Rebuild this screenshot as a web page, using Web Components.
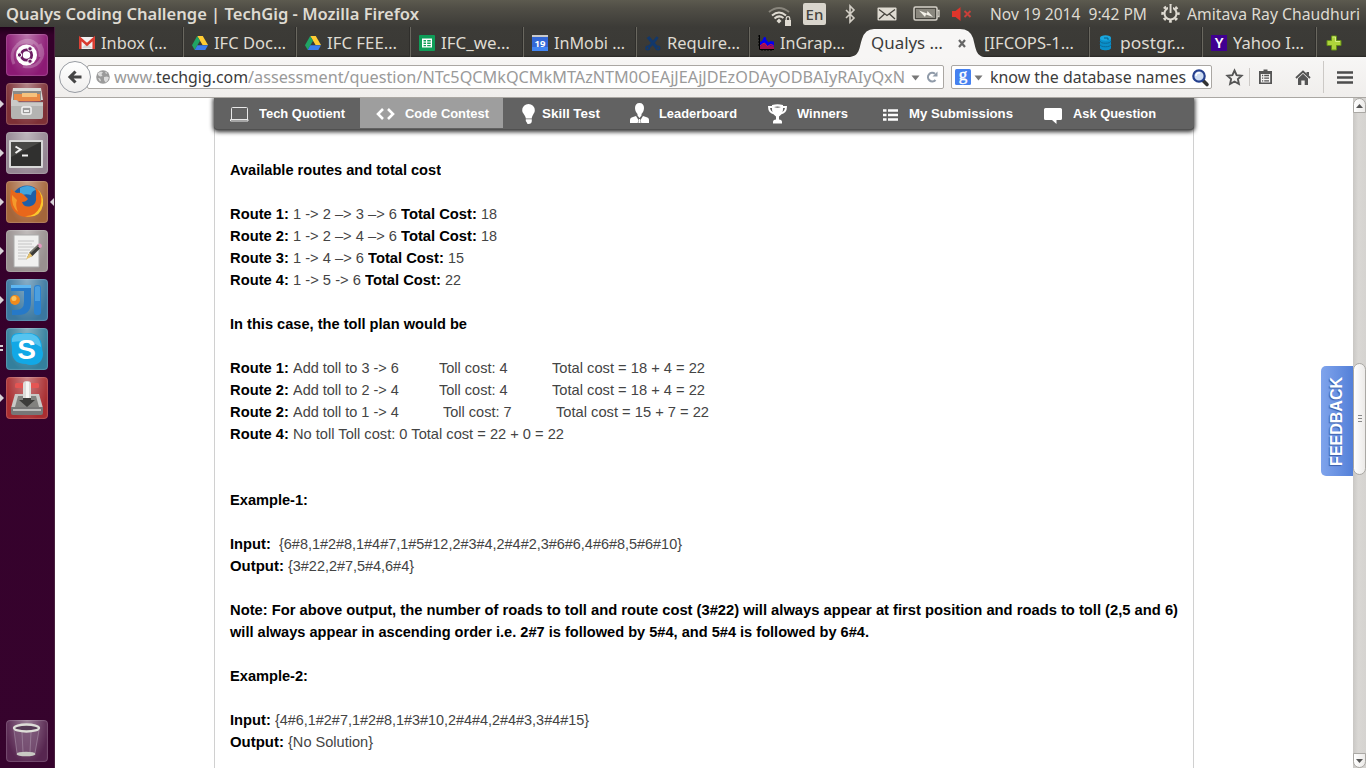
<!DOCTYPE html>
<html lang="en">
<head>
<meta charset="utf-8">
<title>Qualys Coding Challenge | TechGig</title>
<style>
html,body{margin:0;height:100%;overflow:hidden;background:#fff}
body{font-family:"Liberation Sans",Arial,sans-serif}
</style>
</head>
<body>
<desktop-shell></desktop-shell>
<script>
function define(name, render) {
  customElements.define(name, class extends HTMLElement {
    constructor() { super(); this.attachShadow({mode: 'open'}); }
    connectedCallback() { if (!this.shadowRoot.firstChild) this.shadowRoot.innerHTML = render(this); }
  });
}
const UI = `"Noto Sans","Open Sans",sans-serif`;

/* Icon artwork, keyed by name: [width, height, markup] */
const icons = {
  wifi: [24,20,`<g fill="none" stroke-width="2"><path d="M1 6Q11-2 21 6" stroke="#88857c"/><path d="M4 9.500Q11 3.500 18 9.500M6.500 12.500Q11 8.500 15.500 12" stroke="#dfdbd2"/></g><path d="M8.500 15l2.500-2.500 2.500 2.500-2.500 2.500z" fill="#dfdbd2"/><path d="M17 14h6v6h-6z" fill="#dfdbd2"/><path d="M18.200 14v-1.500a1.800 1.800 0 0 1 3.600 0V14" fill="none" stroke="#dfdbd2" stroke-width="1.200"/>`],
  bt: [10,18,`<path d="M1 5l8 8-4 4V1l4 4-8 8" fill="none" stroke="#d3cfc6" stroke-width="1.600"/>`],
  mail: [20,14,`<rect x=".5" y=".5" width="19" height="13" rx="1" fill="#dfdbd2"/><path d="M2 2.500l8 6 8-6M2 12l5.500-5M18 12l-5.500-5" fill="none" stroke="#45433d" stroke-width="1.300"/>`],
  battery: [27,15,`<rect x="1" y="1" width="23" height="13" rx="1.500" fill="none" stroke="#d5d1c8" stroke-width="1.500"/><rect x="3" y="3" width="19" height="9" fill="#8a877e"/><path d="M24.500 4.500H26v6h-1.500" fill="none" stroke="#d5d1c8" stroke-width="1.300"/><path d="M6 4.500l8 3 .5-2.500 5.500 6-7-2.500-1 2.500z" fill="#f4f1e9"/>`],
  volume: [20,14,`<path d="M0 4h3.500L8.500 0v14L3.500 10H0z" fill="#e0352b"/><path d="M12.500 4l6 6m0-6l-6 6" stroke="#c9403a" stroke-width="1.900"/>`],
  gear: [19,19,`<g stroke="#dfdbd2" fill="none"><circle cx="9.500" cy="9.500" r="6" stroke-width="2"/><circle cx="9.500" cy="9.500" r="7.900" stroke-width="2.600" stroke-dasharray="2.800 3.404" stroke-dashoffset="1.400"/></g><path d="M7 .5h5V8H7z" fill="#4f4d46"/><path d="M8.600 0h1.900v9H8.600z" fill="#dfdbd2"/>`],
  gmail: [16,12,`<rect width="16" height="12" rx="1" fill="#f1f1f1"/><path d="M3 11l5-5 5 5z" fill="#d4d4d4"/><path d="M1.300 12V1.500L8 7.500l6.700-6V12" fill="none" stroke="#d93a2e" stroke-width="2.500"/>`],
  drive: [16,14,`<path d="M5.200 0h5.600L16 9h-5.400z" fill="#fc3"/><path d="M5.200 0L0 9.200 2.700 14 8 4.800z" fill="#20a464"/><path d="M5.400 9.200H16L13.300 14H2.700z" fill="#3b7ded"/>`],
  sheet: [16,16,`<rect width="16" height="16" rx="1" fill="#0f9d58"/><path d="M3 3.500h10v9H3z" fill="#fff"/><path d="M4.500 5H7v1.500H4.500zM8.200 5h3.500v1.500H8.200zM4.500 7.500H7V9H4.500zM8.200 7.500h3.500V9H8.200zM4.500 10H7v1.300H4.500zM8.200 10h3.500v1.300H8.200z" fill="#0f9d58"/>`],
  cal: [16,16,`<rect width="16" height="16" rx="1" fill="#3367d6"/><path d="M0 0h16v2H0z" fill="#c9c9c9"/><path d="M0 12h16v4H0z" fill="#4285f4"/><text x="8" y="12.400" text-anchor="middle" font-family="Noto Sans" font-weight="bold" font-size="9.500" fill="#fff">19</text>`],
  jira: [16,15,`<g fill="none" stroke="#12386b"><path d="M3 1l9 11" stroke-width="3.200"/><path d="M12.500 1Q8 8 3 11.500" stroke-width="2.600"/><circle cx="2.700" cy="12" r="1.700" stroke-width="1.600"/><circle cx="13" cy="12" r="1.700" stroke-width="1.600"/></g>`],
  graph: [16,16,`<path d="M1.500 14V7L4 6l2-4h1.500l1 3 2 2.500 2-1.500 2.500.5H16V14z" fill="#00e"/><path d="M1.500 15v-3l2-2 3-2 3 3.500 3-1 3.500 1V15z" fill="#a0124f"/><path d="M1.500 11.500l2-2 3-1.500 3 3.500 3-2 3 1" fill="none" stroke="#e3123a"/><path d="M1.500 0v14.500H16M0 1h1.500M0 4h1.500M0 7h1.500M0 10h1.500M4 14v2M7 14v2M10 14v2M13 14v2" stroke="#000" fill="none"/>`],
  db: [14,16,`<path d="M1 3v10c0 3 11 3 11 0V3z" fill="#0a8fc9"/><ellipse cx="6.500" cy="3" rx="5.500" ry="2.700" fill="#19a7df"/><path d="M1 6c0 3 11 3 11 0M1 9.500c0 3 11 3 11 0" fill="none" stroke="#0b6c9b" stroke-width="1"/><path d="M5 3h4v2" stroke="#0b5d87" fill="none"/>`],
  yahoo: [16,16,`<rect width="16" height="16" fill="#400090"/><text x="8" y="13" text-anchor="middle" font-family="Noto Sans" font-weight="600" font-size="14.500" fill="#fff" style="line-height:1">Y</text>`],
  plus: [16,16,`<path d="M5.500 1h5v4.500H15v5h-4.500V15h-5v-4.500H1v-5h4.500z" fill="#aed43b" stroke="#648f17" stroke-width="1"/><path d="M6.500 2h3v4.500H14" stroke="#d6ee86" fill="none"/>`],
  close: [8,9,`<path d="M1 1l6 7M7 1L1 8" stroke="#666" stroke-width="2.200"/>`],
  back: [14,14,`<path d="M13.500 7H3M7.500 1.500L2 7l5.500 5.500" fill="none" stroke="#454545" stroke-width="3.100"/>`],
  globe: [14,14,`<circle cx="7" cy="7" r="6.800" fill="#9b9b9b"/><path d="M2 3l3-1.500 2 1L5.500 4l1 2-2.500.500L2 5zM8 7l3-.500 2 1-1.500 3.500-2 1.500L8 10zM9 1.500l2.500 1.500L10 4zM2 8l2 .5 1 2-1 1z" fill="#dcdcdc"/>`],
  tri: [9,6,`<path d="M.5.500h8L4.500 5.500z" fill="#777"/>`],
  reload: [12,12,`<path d="M9 2.800A4.300 4.300 0 1 0 9.500 9" fill="none" stroke="#909ba9" stroke-width="2.100"/><path d="M6.500 5.500h5V.5z" fill="#909ba9"/>`],
  google: [16,16,`<rect width="16" height="16" rx="1.500" fill="#4581f0"/><text x="8" y="11.300" text-anchor="middle" font-family="Liberation Serif" font-size="17" fill="#fff" stroke="#fff" stroke-width=".4">g</text>`],
  search: [17,17,`<path d="M10.500 11l4.500 4.500" stroke="#333" stroke-width="3.600" stroke-linecap="round"/><circle cx="7" cy="7" r="5.700" fill="#cddcf3" stroke="#25408e" stroke-width="2.200"/><path d="M4 7a3 3 0 0 1 4-3" stroke="#fff" fill="none" stroke-width="1.500"/>`],
  star: [17,16,`<path d="M8.500 1.500l2.100 4.600 5 .6-3.700 3.400 1 4.900-4.400-2.500L4.100 15l1-4.900L1.400 6.700l5-.6z" fill="none" stroke="#555" stroke-width="1.900"/>`],
  clip: [15,16,`<path d="M5.500.5h4V2H14v13H1V2h4.500z" fill="#555"/><path d="M2.800 5h9.400v8.500H2.800z" fill="#f4f3f2"/><path d="M4 6.500h1.200M6.200 6.500H11M4 9.200h1.200M6.200 9.200H11M4 11.800h1.200M6.200 11.800H11" stroke="#555" stroke-width="1.300"/>`],
  home: [16,15,`<path d="M1 8L8 1.500 15 8" fill="none" stroke="#555" stroke-width="1.900"/><path d="M3 8.500l5-4.700 5 4.700V15H9.700v-4.500H6.300V15H3z" fill="#555"/><path d="M11.500 2H14v4l-2.500-2z" fill="#555"/>`],
  menu: [16,13,`<path d="M0 1.500h16M0 6.500h16M0 11.500h16" stroke="#4c4c4c" stroke-width="2.600"/>`],
  laptop: [19,15,`<path d="M1.500 12V1.500q0-1 1-1h14q1 0 1 1V12M.5 12.500h17.500v1.500H.5z" fill="none" stroke="#e8e8e8" stroke-width="1"/>`],
  code: [19,12,`<path d="M7 1L2 6l5 5M12 1l5 5-5 5" fill="none" stroke="#fff" stroke-width="2.600"/>`],
  bulb: [13,20,`<path d="M6.500 0A6.300 6.300 0 0 1 12.800 6.300C12.800 9.500 10 11 9.800 14.500H3.800C3.500 11 .2 9.500.2 6.300A6.300 6.300 0 0 1 6.500 0zM3.800 15.300h6V17q0 3-3.500 3Q5 20 4.800 18.500L3.800 17z" fill="#fff"/>`],
  person: [19,20,`<path d="M9.500 0c3 0 4.500 2 4.500 5s-1.500 5-2.500 6v1.500L9.500 15l-2-2.500V11C6.500 10 5 8 5 5s1.500-5 4.500-5z" fill="#fff"/><path d="M6 13l2.500 4-.8 3H0v-3q0-2.500 3-3zM13 13l-2.500 4 .8 3H19v-3q0-2.500-3-3zM9 16h1l.7 4H8.300z" fill="#fff"/>`],
  cup: [19,20,`<path d="M4 1q5.500-1.500 11 0v4q0 5-4 7.500v3q3 .3 3 2.500v1.500H5V18q0-2.200 3-2.500v-3Q4 10 4 5z" fill="#fff"/><path d="M4.500 3H1q0 5.500 5.500 6.500M14.500 3H18q0 5.500-5.500 6.500" fill="none" stroke="#fff" stroke-width="1.900"/><path d="M6 3q3.500-1 7 0-3.500 1.500-7 0z" fill="#626262"/>`],
  list: [15,12,`<path d="M0 1.500h3.500M5 1.500h10M0 6h3.500M5 6h10M0 10.500h3.500M5 10.500h10" stroke="#fff" stroke-width="2.700"/>`],
  bubble: [18,16,`<path d="M1.500 0h15Q18 0 18 1.500v9q0 1.500-1.500 1.500H12.500v4L8 12H1.500Q0 12 0 10.500v-9Q0 0 1.500 0z" fill="#fff"/>`],

  ubuntu: [42,42,`<g fill="none" stroke="#fff" stroke-opacity=".22" stroke-width="3"><path d="M8 30C1 15 15 4 27 10M34 10c8 14-4 26-17 22M11 11c10-10 25-3 23 12"/></g><circle cx="20.500" cy="21" r="10.500" fill="#fff"/><circle cx="20.500" cy="21" r="5.200" fill="none" stroke="#6c1c62" stroke-width="2.800"/><g fill="#6c1c62" stroke="#fff"><circle cx="13.500" cy="21" r="2.200"/><circle cx="24" cy="14.800" r="2.200"/><circle cx="24" cy="27.200" r="2.200"/></g>`],
  files: [42,42,`<path d="M7 5h28l2 12H5z" fill="#d8d8d6"/><path d="M7 8h28v10H7z" fill="#8b8b89"/><path d="M8 11h26v7H8z" fill="#e98945"/><path d="M16 10h15v4H16z" fill="#f6c27d"/><path d="M5 17h6l2 2h24v14q0 3-2 3H7q-2 0-2-3z" fill="#b4b4b2"/><path d="M5 17h5l3 3h24v3H5z" fill="#cacac8"/><rect x="16" y="24" width="9" height="7" rx="1" fill="#999" stroke="#f6f6f6" stroke-width="1.500"/><path d="M18 27h5v2h-5z" fill="#eee"/>`],
  term: [42,42,`<rect x="3" y="8" width="34" height="28" rx="1" fill="#d8d8d8"/><rect x="5" y="10" width="30" height="24" fill="#30302f"/><path d="M5 10h30L5 25z" fill="#484846"/><path d="M9.500 14.500l5 3-5 3.500M16 23.500h6" stroke="#f2f2f2" fill="none" stroke-width="2"/>`],
  firefox: [42,42,`<circle cx="21" cy="20" r="15.500" fill="#1f5fa8"/><path d="M14 7q9-5 17 2-5 0-6 5-6-2-11 1z" fill="#42a5de"/><path d="M5 8q3 3 6 4 4-1 7 2l4 4q-2 3-6 3 2 6 9 4 6-2 5-10 1-6-2-9 7 4 9 12 1 12-9 17-12 4-20-5C3 24 4 15 5 8z" fill="#e8671b"/><path d="M31 8q7 7 3 18-5 10-15 9 15 3 18-11Q38 13 31 8z" fill="#fbc82e"/><path d="M6 14q-1 11 6 17-3-7-1-12z" fill="#f59a2b"/>`],
  edit: [42,42,`<path d="M8 5h25v32H8z" fill="#f0f0ef" stroke="#aaa"/><path d="M12 11h16M12 14h14M12 17h16M12 20h12M12 23h10M12 26h8M12 29h9" stroke="#c4c4c4"/><path d="M21 28l2.500-5.500L32 14.500l3 3-8.500 8.500z" fill="#3b3b38"/><path d="M20 29.500l3.500-7 3 3.500z" fill="#e6c26c"/><path d="M31 15l2-1.500q3.500 0 2.700 3.500L34 18.500z" fill="#e59ac0"/><path d="M24 22l8-7.500 1 1-8 7.500z" fill="#7b7b72"/>`],
  idea: [42,42,`<path d="M5 6h20v17q0 13-13 13H6v-5h4q8 0 8-8V12H5z" fill="#2679c8"/><path d="M5 6h20v3H5z" fill="#5fb7f1"/><rect x="28" y="6" width="7" height="30" rx="3" fill="#2b83d2"/><path d="M29 8q3-2 5 0v14h-5z" fill="#4b9fe0"/><circle cx="9" cy="21" r="5" fill="#f18a1c"/><circle cx="8" cy="19.500" r="2.500" fill="#fcc45c"/>`],
  skype: [42,42,`<path d="M5 14Q4 4 15 5q3 1 5 0 15-1 16 14 0 3 1 6 0 12-12 12-3 0-5-1Q5 36 6 21q0-3-1-7z" fill="#12a8e6"/><path d="M6 14Q5 5 15 6q19-3 20 13-12-8-29-5z" fill="#55c4f0"/><text x="20.500" y="30.500" text-anchor="middle" font-family="Liberation Sans" font-weight="bold" font-size="28" fill="#fff">S</text>`],
  down: [42,42,`<rect x="9" y="6" width="24" height="5" rx="1.500" fill="#e45553"/><path d="M9 17h24l4 14H5z" fill="#c8c8c6"/><path d="M12 19h18l3 11H9z" fill="#82827f"/><path d="M5 30h32v6q0 2-2 2H7q-2 0-2-2z" fill="#777" /><path d="M7 32h28v2H7z" fill="#bdbdbb"/><path d="M17 20h8v3l4 0-8 7-8-7h4z" fill="#3c3c3a"/><path d="M17 7q0-3 4-3t4 3v14h-8z" fill="#ddddda"/><path d="M20 5h3v16h-3z" fill="#f6f6f4"/>`],
  trash: [42,42,`<path d="M8 8l3 25q9 4 18 0l4-25z" fill="#7a5577" fill-opacity=".65"/><path d="M8 10l3 23M33 10l-4 23M16 12l1 20M25 12l-1 20" stroke="#a991a8" stroke-opacity=".6"/><ellipse cx="20.500" cy="8" rx="12.500" ry="3.500" fill="#563a55" stroke="#deded8" stroke-width="2.300"/><ellipse cx="20" cy="34" rx="9.500" ry="2.300" fill="#c9c9c4"/>`]
};
define('ui-icon', el => {
  const [w, h, art] = icons[el.getAttribute('name')];
  return `<style>:host{display:block;flex:none;width:${w}px;height:${h}px}svg{display:block;overflow:visible}</style>
    <svg width="${w}" height="${h}" viewBox="0 0 ${w} ${h}">${art}</svg>`;
});

/* Top panel */
define('top-panel', () => `<style>
  :host{display:flex;align-items:center;height:27px;box-sizing:border-box;padding:0 6px;
    background:linear-gradient(#5c5a4f,#504e46 30%,#3c3b37);color:#dfdbd2;font:16.5px/27px ${UI}}
  b{font-weight:600}
  .sp{flex:1}
  .en{width:23px;height:22px;border-radius:2px;background:#d9d5cc;color:#45433d;font:500 15px/22px ${UI};text-align:center;margin:0 19px 0 11px}
  </style>
  <fit-text w="413"><b>Qualys Coding Challenge | TechGig - Mozilla Firefox</b></fit-text><span class="sp"></span>
  <ui-icon name="wifi" style="margin-top:4px"></ui-icon><div class="en">En</div>
  <ui-icon name="bt"></ui-icon><ui-icon name="mail" style="margin-left:22px"></ui-icon>
  <ui-icon name="battery" style="margin-left:16px"></ui-icon><ui-icon name="volume" style="margin-left:12px"></ui-icon>
  <fit-text w="157" style="margin-left:18px">Nov 19 2014  9:42 PM</fit-text>
  <ui-icon name="gear" style="margin-left:14px"></ui-icon>
  <fit-text w="173" style="margin-left:7px">Amitava Ray Chaudhuri</fit-text>`);

/* Launcher */
define('launch-tile', el => `<style>
  :host{display:flex;align-items:center;width:54px;height:42px;box-sizing:border-box;position:relative}
  .t{width:42px;height:42px;margin-left:6px;border-radius:4px;background:radial-gradient(ellipse at 50% 0,rgba(255,255,255,.4),rgba(255,255,255,0) 75%),${el.getAttribute('color')};box-shadow:inset 0 0 1px 1px rgba(255,255,255,.18)}
  .l,.r{position:absolute;top:17px;width:0;height:0;border:4px solid transparent}
  .l{left:0;border-left-color:#d8d2d7;border-right:0}
  .r{right:0;border-right-color:#d8d2d7;border-left:0}
  .d{position:absolute;left:0;top:17px;width:3px;height:2px;border:solid #d8d2d7;border-width:2px 0}
  </style>${({run:'<i class="l"></i>', focus:'<i class="l"></i><i class="r"></i>', two:'<i class="d"></i>'})[el.getAttribute('state')] || ''}
  <div class="t"><ui-icon name="${el.getAttribute('icon')}"></ui-icon></div>`);
define('side-launcher', () => `<style>
  :host{display:flex;flex-direction:column;gap:7px;width:55px;box-sizing:border-box;padding:7px 0 6px;border-right:1px solid #49213f;
   background:linear-gradient(#1e0018,#35002b 8px,#36032d);flex:none}
  launch-tile:last-child{margin-top:auto}</style>
  <launch-tile icon="ubuntu" color="#8c1a74"></launch-tile>
  <launch-tile icon="files" color="#7d3036" state="run"></launch-tile>
  <launch-tile icon="term" color="#948692" state="run"></launch-tile>
  <launch-tile icon="firefox" color="#a4653a" state="focus"></launch-tile>
  <launch-tile icon="edit" color="#98908f" state="run"></launch-tile>
  <launch-tile icon="idea" color="#3a779f" state="run"></launch-tile>
  <launch-tile icon="skype" color="#337f9c" state="two"></launch-tile>
  <launch-tile icon="down" color="#a92d30" state="run"></launch-tile>
  <launch-tile icon="trash" color="#572650"></launch-tile>`);

/* Tabs */
define('browser-tab', el => {
  const icon = el.getAttribute('icon');
  return `<style>
  :host{display:flex;align-items:center;flex:none;width:113.200px;height:30px;box-sizing:border-box;padding:2px 0 0 8px;border-right:1px solid #69675f;box-shadow:inset -1px 0 #2f2e2b;color:#dfdbd2}
  :host([plain]){border-color:transparent;box-shadow:none}
  .i{width:16px;display:flex;justify-content:center;margin-right:6px}
  </style>${icon ? `<div class="i"><ui-icon name="${icon}"></ui-icon></div>` : ''}<fit-text w="${el.getAttribute('w')}"><slot></slot></fit-text>`;
});
define('active-tab', () => `<style>
  :host{display:grid;flex:none;width:140px;height:30px;margin:0 -13px 0 -14px;color:#3c3c3c;z-index:1}
  svg,.c{grid-area:1/1}
  .c{display:flex;align-items:center;padding:2px 0 0 34px;line-height:28px}
  ui-icon{margin-left:15px}</style>
  <svg width="150" height="30"><path d="M11 30C23 30 22 21 25 12Q28 2 37 2H123Q133 2 136 11C139 22 139 30 149 30z" fill="#f7f6f5"/></svg>
  <div class="c"><fit-text w="72"><slot></slot></fit-text><ui-icon name="close"></ui-icon></div>`);
define('tab-strip', () => `<style>
  :host{display:flex;height:30px;padding-left:16px;background:linear-gradient(#3c3b37,#3a3935 28px,#282724);font:16.500px/28px ${UI}}
  ui-icon{margin:8px 0 0 9px}</style>
  <browser-tab icon="gmail" w="66">Inbox (…</browser-tab>
  <browser-tab icon="drive" w="72">IFC Doc…</browser-tab>
  <browser-tab icon="drive" w="70">IFC FEE…</browser-tab>
  <browser-tab icon="sheet" w="69">IFC_we…</browser-tab>
  <browser-tab icon="cal" w="71">InMobi …</browser-tab>
  <browser-tab icon="jira" w="73">Require…</browser-tab>
  <browser-tab icon="graph" w="65" plain style="width:101px">InGrap…</browser-tab>
  <active-tab>Qualys …</active-tab>
  <browser-tab w="90" style="width:126px;padding-left:20px">[IFCOPS-1…</browser-tab>
  <browser-tab icon="db" w="65">postgr…</browser-tab>
  <browser-tab icon="yahoo" w="71">Yahoo I…</browser-tab>
  <ui-icon name="plus"></ui-icon>`);

/* Navigation toolbar */
define('nav-toolbar', () => `<style>
  :host{display:flex;align-items:center;height:41px;box-sizing:border-box;border-bottom:1px solid #aaa7a3;background:linear-gradient(#f7f6f5,#f0eeec);font:16.500px/22px ${UI};color:#3c3c3c;padding-left:4px}
  .back{width:32px;height:32px;box-sizing:border-box;border:1px solid #989ca3;border-radius:50%;background:linear-gradient(#fff,#efeeed);display:grid;place-items:center;z-index:1;flex:none}
  .box{display:flex;align-items:center;height:24px;box-sizing:border-box;border:1px solid #aaa7a3;border-radius:2px;background:#fff;flex:none}
  .url{width:857px;margin-left:-4px;padding-left:8px;color:#9a9a9a}
  .url b{font-weight:400;color:#3a3a3a}
  .s{width:261px;margin-left:7px;padding-left:3px}
  .v{width:1px;background:#ccc9c6;height:18px}
  </style>
  <div class="back"><ui-icon name="back"></ui-icon></div>
  <div class="box url"><ui-icon name="globe"></ui-icon><fit-text w="42" style="margin-left:4px">www.</fit-text><fit-text w="92"><b>techgig.com</b></fit-text><fit-text w="657">/assessment/question/NTc5QCMkQCMkMTAzNTM0OEAjJEAjJDEzODAyODBAIyRAIyQxN</fit-text><ui-icon name="tri" style="margin:1px 0 0 6px"></ui-icon><ui-icon name="reload" style="margin-left:6px"></ui-icon></div>
  <div class="box s"><ui-icon name="google"></ui-icon><ui-icon name="tri" style="margin:1px 0 0 3px"></ui-icon><fit-text w="196" style="margin-left:7px">know the database names</fit-text><ui-icon name="search" style="margin-left:6px"></ui-icon></div>
  <ui-icon name="star" style="margin-left:14px"></ui-icon><div class="v" style="margin:0 8px 0 6px"></div><ui-icon name="clip"></ui-icon>
  <ui-icon name="home" style="margin-left:22px"></ui-icon><div class="v" style="height:32px;margin:0 13px 0 12px"></div><ui-icon name="menu"></ui-icon>`);

/* Site menu */
define('menu-item', el => `<style>
  :host{display:flex;align-items:center;height:30px;box-sizing:border-box;flex:none}
  ui-icon{margin-right:var(--gap,10px);position:relative;top:var(--dy,0px)}
  fit-text{padding-top:2px}
  :host([on]){background:#9e9e9e}
  </style><ui-icon name="${el.getAttribute('icon')}"></ui-icon><fit-text w="${el.getAttribute('w')}"><slot></slot></fit-text>`);
define('site-menu', () => `<style>
  :host{display:flex;height:32px;background:#626262;border-radius:0 0 4px 4px;box-shadow:0 1px 4px 1px #333,inset 0 -1px #505050;color:#fff;font:bold 13px/28px "Liberation Sans",sans-serif;margin:0 -1px}
  </style>
  <menu-item icon="laptop" w="86" style="width:146px;padding-left:16px;--dy:1px">Tech Quotient</menu-item>
  <menu-item icon="code" w="84" on style="width:143px;padding-left:16px;--dy:1px">Code Contest</menu-item>
  <menu-item icon="bulb" w="58" style="width:107px;padding-left:19px;--gap:7px;--dy:1px">Skill Test</menu-item>
  <menu-item icon="person" w="78" style="width:138px;padding-left:20px">Leaderboard</menu-item>
  <menu-item icon="cup" w="51" style="width:112px;padding-left:20px;--dy:1px">Winners</menu-item>
  <menu-item icon="list" w="104" style="width:164px;padding-left:23px;--gap:11px;--dy:2px">My Submissions</menu-item>
  <menu-item icon="bubble" w="83" style="padding-left:20px;--gap:11px;--dy:3px">Ask Question</menu-item>`);

/* Problem statement: each line is a list of [text, width, bold] runs */
const R = (t, w) => `<fit-text w="${w}">${t.replace(/>/g, '&gt;')}</fit-text>`;
const B = (t, w) => `<b>${R(t, w)}</b>`;
define('challenge-text', () => `<style>
  :host{display:block;padding:29px 15px 0;font:15px/22px "Liberation Sans",sans-serif;color:#444}
  div{display:flex;height:22px}
  p{margin:0 0 22px}
  b{color:#000}
  </style>
<p>${B('Available routes and total cost', 211)}</p>
<p><div>${B('Route 1: ', 63)}${R('1 -> 2 –> 3 –> 6 ', 108)}${B('Total Cost: ', 80)}${R('18', 16)}</div>
<div>${B('Route 2: ', 63)}${R('1 -> 2 –> 4 –> 6 ', 108)}${B('Total Cost: ', 80)}${R('18', 16)}</div>
<div>${B('Route 3: ', 63)}${R('1 -> 4 –> 6 ', 75)}${B('Total Cost: ', 80)}${R('15', 16)}</div>
<div style="margin-bottom:22px">${B('Route 4: ', 63)}${R('1 -> 5 -> 6 ', 72)}${B('Total Cost: ', 80)}${R('22', 16)}</div>
<p>${B('In this case, the toll plan would be', 237)}</p>
<div>${B('Route 1: ', 63)}${R('Add toll to 3 -> 6          ', 146)}${R('Toll cost: 4           ', 113)}${R('Total cost = 18 + 4 = 22', 153)}</div>
<div>${B('Route 2: ', 63)}${R('Add toll to 2 -> 4          ', 146)}${R('Toll cost: 4           ', 113)}${R('Total cost = 18 + 4 = 22', 153)}</div>
<div>${B('Route 2: ', 63)}${R('Add toll to 1 -> 4           ', 150)}${R('Toll cost: 7           ', 113)}${R('Total cost = 15 + 7 = 22', 153)}</div>
<div style="margin-bottom:44px">${B('Route 4: ', 63)}${R('No toll Toll cost: 0 Total cost = 22 + 0 = 22', 271)}</div>
<p>${B('Example-1:', 78)}</p>
<div>${B('Input:  ', 49)}${R('{6#8,1#2#8,1#4#7,1#5#12,2#3#4,2#4#2,3#6#6,4#6#8,5#6#10}', 403)}</div>
<div style="margin-bottom:22px">${B('Output: ', 58)}${R('{3#22,2#7,5#4,6#4}', 126)}</div>
<div>${B('Note: For above output, the number of roads to toll and route cost (3#22) will always appear at first position and roads to toll (2,5 and 6)', 948)}</div>
<div style="margin-bottom:22px">${B('will always appear in ascending order i.e. 2#7 is followed by 5#4, and 5#4 is followed by 6#4.', 639)}</div>
<p>${B('Example-2:', 78)}</p>
<div>${B('Input: ', 45)}${R('{4#6,1#2#7,1#2#8,1#3#10,2#4#4,2#4#3,3#4#15}', 314)}</div>
<div>${B('Output: ', 58)}${R('{No Solution}', 85)}</div>`.replace('<p><div>', '<div>'));

define('scroll-bar', () => `<style>
  :host{display:flex;flex-direction:column;width:13px;flex:none;box-sizing:border-box;background:linear-gradient(90deg,#c9c7c4,#d9d7d4 40%,#d5d3d0)}
  div{box-sizing:border-box;border:1px solid #aaa8a4;border-radius:7px;background:linear-gradient(90deg,#fff,#eceae8);display:grid;place-items:center;flex:none}
  .e{height:15px} .u{border-radius:7px 7px 0 0}.d{border-radius:0 0 7px 7px;margin-top:auto}
  .th{height:112px;margin-top:250px}
  </style><div class="e u"><svg width="7" height="4"><path d="M0 4l3.500-4L7 4z" fill="#555"/></svg></div>
  <div class="th"><svg width="4" height="8"><path d="M0 .5h4M0 3.500h4M0 6.500h4" stroke="#888"/></svg></div>
  <div class="e d"><svg width="7" height="4"><path d="M0 0l3.500 4L7 0z" fill="#555"/></svg></div>`);

define('feedback-tab', () => `<style>
  :host{position:absolute;right:13px;top:268px;width:32px;height:110px;border-radius:5px 0 0 5px;background:linear-gradient(90deg,#7fa4ec,#5480d8);display:grid;place-items:center}
  div{writing-mode:vertical-rl;transform:rotate(180deg);font:bold 16px/32px "Liberation Sans",sans-serif;color:#fff;text-shadow:-1px -1px 1px #3c5fa8}
  </style><div>FEEDBACK</div>`);

define('page-view', () => `<style>
  :host{display:flex;flex:1;min-height:0;position:relative;background:#fff;overflow:hidden}
  .scroll{flex:1;overflow:hidden}
  .col{width:978px;margin-left:159px;border:solid #d0d0d0;border-width:0 1px;height:100%}
  </style><div class="scroll"><div class="col"><site-menu></site-menu><challenge-text></challenge-text></div></div>
  <scroll-bar></scroll-bar><feedback-tab></feedback-tab>`);

define('desktop-shell', () => `<style>
  :host{display:flex;flex-direction:column;width:1366px;height:768px;overflow:hidden}
  .row{display:flex;flex:1;min-height:0}
  .win{display:flex;flex-direction:column;flex:1;min-width:0}
  </style><top-panel></top-panel><div class="row"><side-launcher></side-launcher>
  <div class="win"><tab-strip></tab-strip><nav-toolbar></nav-toolbar><page-view></page-view></div></div>`);

/* A run of text that is condensed or widened to a given width */
customElements.define('fit-text', class extends HTMLElement {
  constructor() {
    super();
    this.attachShadow({mode: 'open'}).innerHTML = `<style>
      :host{display:block;flex:none;white-space:pre}
      span{display:inline-block;transform-origin:0 50%}</style><span><slot></slot></span>`;
  }
  connectedCallback() {
    const w = +this.getAttribute('w'), s = this.shadowRoot.querySelector('span');
    s.style.transform = `scaleX(${w / s.getBoundingClientRect().width})`;
    this.style.width = w + 'px';
  }
});
</script>
</body>
</html>
